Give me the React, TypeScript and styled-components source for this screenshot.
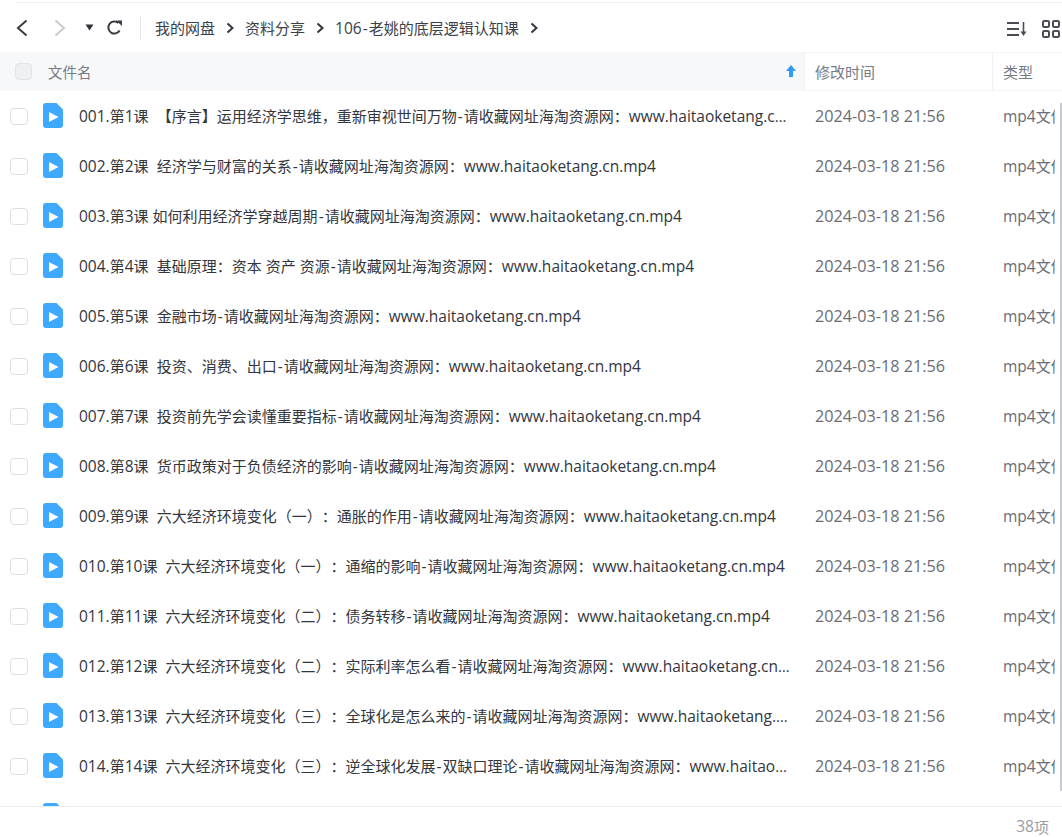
import { Fragment } from "react";
import styled, { createGlobalStyle } from "styled-components";

const files = [
  "001.第1课  【序言】运用经济学思维，重新审视世间万物-请收藏网址海淘资源网：www.haitaoketang.cn.mp4",
  "002.第2课  经济学与财富的关系-请收藏网址海淘资源网：www.haitaoketang.cn.mp4",
  "003.第3课 如何利用经济学穿越周期-请收藏网址海淘资源网：www.haitaoketang.cn.mp4",
  "004.第4课  基础原理：资本 资产 资源-请收藏网址海淘资源网：www.haitaoketang.cn.mp4",
  "005.第5课  金融市场-请收藏网址海淘资源网：www.haitaoketang.cn.mp4",
  "006.第6课  投资、消费、出口-请收藏网址海淘资源网：www.haitaoketang.cn.mp4",
  "007.第7课  投资前先学会读懂重要指标-请收藏网址海淘资源网：www.haitaoketang.cn.mp4",
  "008.第8课  货币政策对于负债经济的影响-请收藏网址海淘资源网：www.haitaoketang.cn.mp4",
  "009.第9课  六大经济环境变化（一）：通胀的作用-请收藏网址海淘资源网：www.haitaoketang.cn.mp4",
  "010.第10课  六大经济环境变化（一）：通缩的影响-请收藏网址海淘资源网：www.haitaoketang.cn.mp4",
  "011.第11课  六大经济环境变化（二）：债务转移-请收藏网址海淘资源网：www.haitaoketang.cn.mp4",
  "012.第12课  六大经济环境变化（二）：实际利率怎么看-请收藏网址海淘资源网：www.haitaoketang.cn.mp4",
  "013.第13课  六大经济环境变化（三）：全球化是怎么来的-请收藏网址海淘资源网：www.haitaoketang.cn.mp4",
  "014.第14课  六大经济环境变化（三）：逆全球化发展-双缺口理论-请收藏网址海淘资源网：www.haitaoketang.cn.mp4",
  "015.第15课  六大经济环境变化（四）：请收藏网址海淘资源网：www.haitaoketang.cn.mp4",
];

const crumbs = ["我的网盘", "资料分享", "106-老姚的底层逻辑认知课"];

const GlobalStyle = createGlobalStyle`
  html, body {
    margin: 0;
    padding: 0;
    height: 100%;
    overflow: hidden;
    background: #fff;
  }
  body {
    font-family: "Open Sans", "Noto Sans CJK SC", sans-serif;
    text-spacing-trim: space-all;
  }
`;

const Page = styled.div`
  width: 1062px;
  height: 837px;
  display: flex;
  flex-direction: column;
  overflow: hidden;
  position: relative;
`;

const TopLine = styled.div`
  height: 1px;
  margin: 2px 0 0 16px;
  background: #eeeff2;
  flex: none;
`;

const Toolbar = styled.div`
  height: 49px;
  flex: none;
  display: flex;
  align-items: center;
  padding-left: 12px;
`;

const NavButton = styled.button<{ $gap?: number }>`
  width: 20px;
  height: 24px;
  padding: 0;
  margin-left: ${(p) => p.$gap ?? 0}px;
  border: 0;
  background: none;
  display: flex;
  align-items: center;
  justify-content: center;
`;

const Divider = styled.div`
  width: 1px;
  height: 24px;
  background: #e6e7ea;
  margin: 0 14px 0 16px;
`;

const Crumbs = styled.div`
  display: flex;
  align-items: center;
  font-size: 15px;
  color: #3b3f47;
  flex: 1;
`;

const Crumb = styled.span`
  white-space: pre;
`;

const CrumbArrow = styled.svg`
  width: 10px;
  height: 12px;
  margin: 0 10px;
  flex: none;
`;

const ViewTools = styled.div`
  display: flex;
  align-items: center;
  gap: 14px;
  padding: 2px 2px 0 0;
`;

const HeadRow = styled.div`
  height: 39px;
  flex: none;
  display: flex;
  background: #f7f8fa;
`;

const HeadName = styled.div`
  width: 804px;
  flex: none;
  display: flex;
  align-items: center;
  padding-left: 15px;
  box-sizing: border-box;
  font-size: 14.5px;
  color: #777b84;
  position: relative;
`;

const HeadCell = styled.div<{ $width: number }>`
  width: ${(p) => p.$width}px;
  flex: none;
  box-sizing: border-box;
  padding-left: 10px;
  display: flex;
  align-items: center;
  font-size: 15px;
  color: #777b84;
  background: #fff;
  border-left: 1px solid #eef0f3;
  border-bottom: 1px solid #f3f4f6;
  border-top: 1px solid #f3f4f6;
`;

const HeadCheck = styled.span`
  width: 17px;
  height: 17px;
  box-sizing: border-box;
  border: 1px solid #e2e4e8;
  border-radius: 4px;
  background: #eff0f3;
  margin-right: 16px;
`;

const SortArrow = styled.svg`
  position: absolute;
  right: 7px;
  top: 12px;
  width: 12px;
  height: 14px;
`;

const List = styled.div`
  flex: 1;
  overflow: hidden;
  position: relative;
`;

const Row = styled.div`
  height: 50px;
  display: flex;
  align-items: center;
`;

const Check = styled.span`
  width: 18px;
  height: 17px;
  box-sizing: border-box;
  flex: none;
  border: 1px solid #dcdfe4;
  border-radius: 4px;
  margin-left: 10px;
`;

const FileIcon = styled.svg`
  width: 20px;
  height: 25px;
  flex: none;
  margin: -1px 0 0 15px;
`;

const Name = styled.div`
  width: 713px;
  flex: none;
  margin-left: 16px;
  font-size: 15px;
  color: #33363d;
  white-space: pre;
  overflow: hidden;
  text-overflow: ellipsis;
`;

const Latin = styled.span`
  font-size: 15.5px;
`;

const Dash = styled.span`
  font-size: 15.5px;
  padding: 0 1px;
`;

const Time = styled.div`
  width: 188px;
  flex: none;
  margin-left: 23px;
  font-size: 16.2px;
  color: #686c75;
  white-space: nowrap;
`;

const Kind = styled.div`
  width: 52px;
  flex: none;
  font-size: 15px;
  color: #686c75;
  white-space: pre;
  overflow: hidden;
`;

const Scrollbar = styled.div`
  position: absolute;
  right: 0;
  top: 12px;
  width: 2px;
  height: 688px;
  background: #c9cbcf;
`;

const Footer = styled.div`
  height: 31px;
  box-sizing: border-box;
  flex: none;
  border-top: 1px solid #eceef0;
  display: flex;
  align-items: center;
  justify-content: flex-end;
  padding: 8px 13px 0 0;
  font-size: 15px;
  color: #9a9ca3;
`;

const Arrow = () => (
  <CrumbArrow viewBox="0 0 10 12">
    <path d="M2.5 1.5 7.5 6 2.5 10.5" fill="none" stroke="#33363d" strokeWidth="2" />
  </CrumbArrow>
);

// digits and latin run a little wider than the CJK text in these labels
const renderMixed = (text: string) =>
  text.split(/([\x00-\x7f]+)/).map((part, i) =>
    i % 2
      ? part.split(/(-)/).map((bit, j) =>
          bit === "-" ? <Dash key={`${i}-${j}`}>-</Dash> : <Latin key={`${i}-${j}`}>{bit}</Latin>,
        )
      : part,
  );

export default function App() {
  return (
    <Page>
      <GlobalStyle />
      <TopLine />
      <Toolbar>
        <NavButton aria-label="后退">
          <svg width="14" height="18" viewBox="0 0 14 18">
            <path d="M11.5 1.5 3 9l8.5 7.5" fill="none" stroke="#3a3d44" strokeWidth="2" />
          </svg>
        </NavButton>
        <NavButton aria-label="前进" $gap={18}>
          <svg width="14" height="18" viewBox="0 0 14 18">
            <path d="M2.5 1.5 11 9l-8.5 7.5" fill="none" stroke="#c9cbd0" strokeWidth="2" />
          </svg>
        </NavButton>
        <NavButton aria-label="历史" $gap={9}>
          <svg width="9" height="7" viewBox="0 0 9 7">
            <path d="M0.5 0.5h8L4.5 6.5z" fill="#2f3238" />
          </svg>
        </NavButton>
        <NavButton aria-label="刷新" $gap={5}>
          <svg width="17" height="17" viewBox="0 0 17 17">
            <path d="M13.6 11.5A6 6 0 1 1 12.3 4" fill="none" stroke="#3a3d44" strokeWidth="2" />
            <path d="M10 1.5h6v5.5z" fill="#3a3d44" />
          </svg>
        </NavButton>
        <Divider />
        <Crumbs>
          {crumbs.map((c) => (
            <Fragment key={c}>
              <Crumb>{renderMixed(c)}</Crumb>
              <Arrow />
            </Fragment>
          ))}
        </Crumbs>
        <ViewTools>
          <svg width="21" height="16" viewBox="0 0 21 16">
            <path d="M0 2h12M0 8h12M0 14h12" stroke="#4a4d55" strokeWidth="2" />
            <path d="M16.5 1v12" stroke="#4a4d55" strokeWidth="1.6" />
            <path d="M13.5 10.5h6l-3 4.5z" fill="#4a4d55" />
          </svg>
          <svg width="18" height="18" viewBox="0 0 18 18" fill="none" stroke="#4a4d55" strokeWidth="2">
            <rect x="1" y="1" width="6" height="6" rx="1.2" />
            <rect x="11" y="1" width="6" height="6" rx="1.2" />
            <rect x="1" y="11" width="6" height="6" rx="1.2" />
            <rect x="11" y="11" width="6" height="6" rx="1.2" />
          </svg>
        </ViewTools>
      </Toolbar>
      <HeadRow>
        <HeadName>
          <HeadCheck />
          文件名
          <SortArrow viewBox="0 0 12 14">
            <path d="M6 1 11 7H8v6H4V7H1z" fill="#2e9bf5" />
          </SortArrow>
        </HeadName>
        <HeadCell $width={188}>修改时间</HeadCell>
        <HeadCell $width={70}>类型</HeadCell>
      </HeadRow>
      <List>
        {files.map((f) => (
          <Row key={f}>
            <Check />
            <FileIcon viewBox="0 0 20 25">
              <path
                d="M3 0h10.5L20 6.5V22a3 3 0 0 1-3 3H3a3 3 0 0 1-3-3V3a3 3 0 0 1 3-3z"
                fill="#3fa9ff"
              />
              <path d="M6 9l9.5 5L6 19z" fill="#fff" />
            </FileIcon>
            <Name>{renderMixed(f)}</Name>
            <Time>2024-03-18 21:56</Time>
            <Kind>{renderMixed("mp4文件")}</Kind>
          </Row>
        ))}
        <Scrollbar />
      </List>
      <Footer>{renderMixed("38项")}</Footer>
    </Page>
  );
}
